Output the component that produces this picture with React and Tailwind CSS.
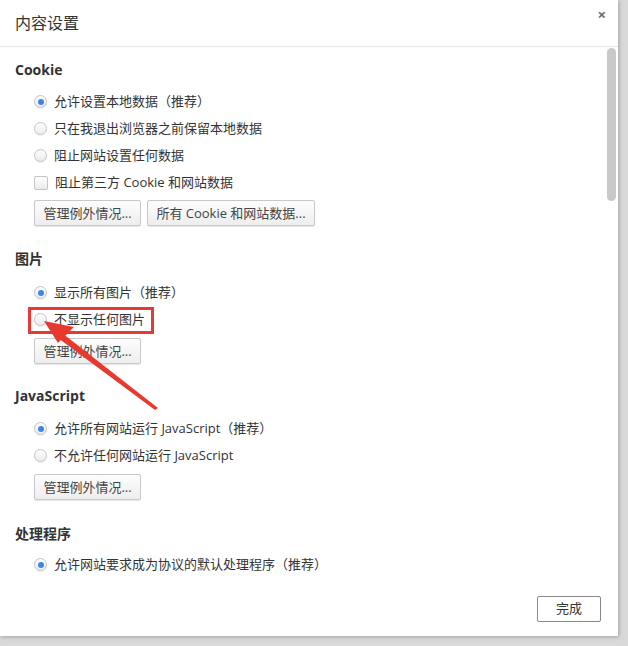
import React from 'react'

const font = { fontFamily: '"Open Sans", "Noto Sans CJK SC", sans-serif' }

const Radio = ({ checked, label }) => {
    return (
        <div className="flex items-center h-[27px] pl-[19px]">
            <span className="w-[13px] h-[13px] rounded-full border border-[#c4c4c4] bg-gradient-to-b from-[#fdfdfd] to-[#ececec] shadow-[0_1px_1px_rgba(0,0,0,0.08)] flex items-center justify-center">
                {checked && <span className="w-[6px] h-[6px] rounded-full bg-[#3b86ec]"></span>}
            </span>
            <span className="ml-[7px] text-[13px] text-[#333] whitespace-nowrap">{label}</span>
        </div>
    )
}

const Check = ({ label }) => {
    return (
        <div className="flex items-center h-[27px] pl-[19px]">
            <span className="w-[14px] h-[14px] rounded-[2px] border border-[#c4c4c4] bg-gradient-to-b from-[#fdfdfd] to-[#ececec]"></span>
            <span className="ml-[7px] text-[13px] text-[#333] whitespace-nowrap">{label}</span>
        </div>
    )
}

const Btn = ({ children, w }) => {
    return (
        <button className={`h-[26px] ${w} px-0 whitespace-nowrap rounded-[2px] border border-[#c8c8c8] bg-gradient-to-b from-[#fdfdfd] to-[#eeeeee] shadow-[0_1px_1px_rgba(0,0,0,0.1)] text-[13px] text-[#444] leading-none`}>
            {children}
        </button>
    )
}

const Heading = ({ children }) => (
    <div className="h-[20px] flex items-center text-[14px] font-bold text-[#333]">{children}</div>
)

const App = () => {
    return (
        <div className="w-[628px] h-[646px] bg-[#d9d9d9] relative overflow-hidden" style={font}>
            <div className="w-[618px] h-[636px] bg-white shadow-[1px_1px_4px_rgba(0,0,0,0.25)] relative flex flex-col">
                <div className="h-[47px] border-b border-[#e8e8e8] flex items-center pl-[15px] relative">
                    <span className="text-[16px] text-[#333]">内容设置</span>
                    <span className="absolute right-[12px] top-[3px] text-[15px] font-bold text-[#6b6b6b]">×</span>
                </div>

                <div className="pl-[15px] pt-[12px] flex flex-col">
                    <Heading>Cookie</Heading>
                    <div className="mt-[9px]">
                        <Radio checked label="允许设置本地数据（推荐）" />
                        <Radio label="只在我退出浏览器之前保留本地数据" />
                        <Radio label="阻止网站设置任何数据" />
                        <Check label="阻止第三方 Cookie 和网站数据" />
                    </div>
                    <div className="flex gap-[6px] pl-[19px] mt-[4px]">
                        <Btn w="w-[107px]">管理例外情况...</Btn>
                        <Btn w="w-[168px]">所有 Cookie 和网站数据...</Btn>
                    </div>

                    <div className="mt-[22px]">
                        <Heading>图片</Heading>
                    </div>
                    <div className="mt-[11px]">
                        <Radio checked label="显示所有图片（推荐）" />
                        <Radio label="不显示任何图片" />
                    </div>
                    <div className="flex pl-[19px] mt-[5px]">
                        <Btn w="w-[107px]">管理例外情况...</Btn>
                    </div>

                    <div className="mt-[21px]">
                        <Heading>JavaScript</Heading>
                    </div>
                    <div className="mt-[10px]">
                        <Radio checked label="允许所有网站运行 JavaScript（推荐）" />
                        <Radio label="不允许任何网站运行 JavaScript" />
                    </div>
                    <div className="flex pl-[19px] mt-[5px]">
                        <Btn w="w-[107px]">管理例外情况...</Btn>
                    </div>

                    <div className="mt-[23px]">
                        <Heading>处理程序</Heading>
                    </div>
                    <div className="mt-[8px]">
                        <Radio checked label="允许网站要求成为协议的默认处理程序（推荐）" />
                    </div>
                </div>

                <div className="mt-auto flex justify-end pr-[17px] pb-[14px]">
                    <button className="w-[64px] h-[26px] rounded-[2px] border border-[#888] bg-white text-[13px] text-[#333]">完成</button>
                </div>

                <div className="absolute right-[2px] top-[48px] w-[9px] h-[153px] rounded-full bg-[#c9c9c9]"></div>

                <div className="absolute left-[28px] top-[307px] w-[126px] h-[27px] border-[3px] border-[#e53935]"></div>

                <svg className="absolute left-0 top-0" width="618" height="636">
                    <polygon points="158,408 155,410 58,338 62,333" fill="#e8392f" />
                    <polygon points="44,321 74,327 58,343" fill="#e8392f" />
                </svg>
            </div>
        </div>
    )
}

export default App
